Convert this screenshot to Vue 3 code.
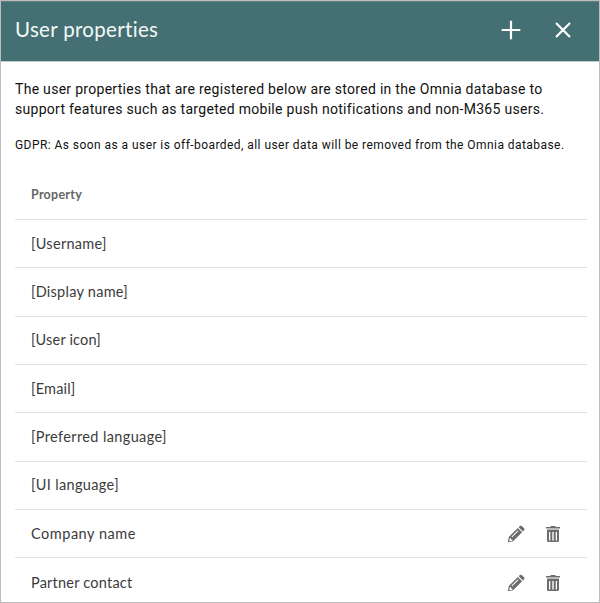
<script setup>
const rows = [
  { name: '[Username]', spacing: 0.3 },
  { name: '[Display name]', spacing: 0.26 },
  { name: '[User icon]', spacing: 0.18 },
  { name: '[Email]', spacing: 0.2 },
  { name: '[Preferred language]', spacing: 0.37 },
  { name: '[UI language]', spacing: 0.34 },
  { name: 'Company name', spacing: 0.52, editable: true },
  { name: 'Partner contact', spacing: 0.22, editable: true },
]
</script>

<template>
  <main class="panel">
    <header class="header">
      <h1><span>User properties</span></h1>
      <button class="add" aria-label="Add">
        <svg width="20" height="20" viewBox="0 0 20 20"><path d="M10 .7v18.6M.7 10h18.6" /></svg>
      </button>
      <button class="close" aria-label="Close">
        <svg width="16" height="16" viewBox="0 0 16 16"><path d="M1 1l14 14M15 1L1 15" /></svg>
      </button>
    </header>
    <section class="content">
      <p class="intro"><span class="l1">The user properties that are registered below are stored in the Omnia database to</span><br /><span class="l2">support features such as targeted mobile push notifications and non-M365 users.</span></p>
      <p class="note"><span>GDPR: As soon as a user is off-boarded, all user data will be removed from the Omnia database.</span></p>
      <div class="table">
        <div class="row heading"><span>Property</span></div>
        <div v-for="row in rows" :key="row.name" class="row">
          <span class="name" :style="{ letterSpacing: row.spacing + 'px' }">{{ row.name }}</span>
          <div v-if="row.editable" class="actions">
            <button aria-label="Edit">
              <svg width="18" height="18" viewBox="0 0 18 18">
                <path fill-rule="evenodd" d="M.8 17.200L1.800 12 10.800 3l4.300 4.300-9 9zM2.800 13.200l-.5 2.400.6.600 2.400-.5v-1.300H4v-1.200zM4.500 11.600l.7.700 6.300-6.300-.7-.7z" />
                <path d="M11.700 2.200l1.100-1.100q1-.9 2 0l2.200 2.200q.9 1 0 2l-1.100 1.100z" />
              </svg>
            </button>
            <button aria-label="Delete">
              <svg width="16" height="18" viewBox="0 0 16 18">
                <path d="M1 2h4L6 1h4l1 1h4v1.500H1z" />
                <path class="lid" d="M2 3.500h12V5H2z" />
                <path fill-rule="evenodd" d="M2 5h12v10.500q0 1.500-1.500 1.500h-9Q2 17 2 15.500zM4 7v8.500h1.300V7zm3.300 0v8.500h1.400V7zm3.400 0v8.500H12V7z" />
              </svg>
            </button>
          </div>
        </div>
      </div>
    </section>
  </main>
</template>

<style>
body { margin: 0; background: #fff; }
</style>

<style scoped>
* { box-sizing: border-box; }
.panel { width: 600px; height: 603px; overflow: hidden; border: 1px solid #bdbdbd; font-family: Roboto, sans-serif; color: #111; }
.header { display: flex; align-items: center; height: 61px; padding: 0 28px 3px 14px; background: #457073; border-bottom: 1px solid #bccaca; box-shadow: inset 0 1px #607f81; }
h1 { flex: 1; margin: 0; padding-bottom: 2px; color: #f2f8f8; font: 400 20.500px/26px Lato, sans-serif; letter-spacing: .32px; }
button { display: flex; padding: 0; border: 0; background: transparent; }
.header path { fill: none; stroke: #fff; stroke-width: 2.200; }
.close { margin-left: 34px; }
.content { padding: 17px 12px 0 14px; }
p { margin: 0; white-space: nowrap; }
.intro { font-size: 14px; line-height: 20px; letter-spacing: .29px; }
.note { margin-top: 16px; font-size: 12px; line-height: 20px; letter-spacing: .44px; }
.table { margin-top: 16.800px; font-family: Lato, sans-serif; color: #3b3b3b; }
.row { display: flex; align-items: center; justify-content: space-between; height: 48.330px; padding: 0 26px 0 16px; border-bottom: 1px solid #e1e1e1; font-size: 14.500px; line-height: 20px; }
.row:last-child { border: 0; }
.heading { font-size: 12.500px; font-weight: 700; color: #666; letter-spacing: .25px; }
.actions { display: flex; align-items: center; gap: 20px; }
.actions svg { fill: #6c6c6c; }
.actions .lid { fill: #bbb; }
</style>
